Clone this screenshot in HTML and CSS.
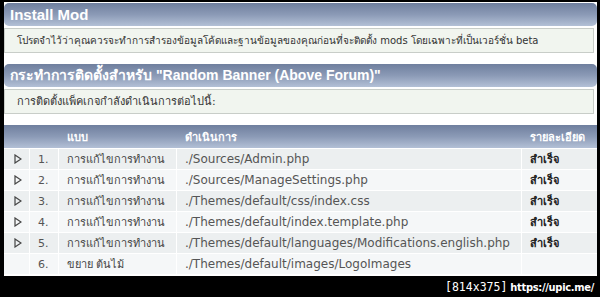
FILE: index.html
```html
<!DOCTYPE html>
<html lang="th">

<head>
    <meta charset="UTF-8">
    <title>Install Mod</title>
    <link rel="stylesheet" href="styles.css">
</head>

<body>

    <div class="frame">
        <h3 class="catbg first">Install Mod</h3>
        <div class="infobox small">โปรดจำไว้ว่าคุณควรจะทำการสำรองข้อมูลโค้ดและฐานข้อมูลของคุณก่อนที่จะติดตั้ง mods โดยเฉพาะที่เป็นเวอร์ชั่น beta</div>

        <h3 class="catbg">กระทำการติดตั้งสำหรับ "Random Banner (Above Forum)"</h3>
        <div class="infobox">การติดตั้งแพ็คเกจกำลังดำเนินการต่อไปนี้:</div>

        <table class="actions">
            <thead>
                <tr>
                    <th class="col-icon"></th>
                    <th class="col-num"></th>
                    <th class="col-type">แบบ</th>
                    <th class="col-path">ดำเนินการ</th>
                    <th class="col-state">รายละเอียด</th>
                </tr>
            </thead>
            <tbody>
                <tr class="odd">
                    <td><svg class="arrow" width="8" height="10" viewBox="0 0 8 10"><path d="M1 1 L7 5 L1 9 Z" fill="none" stroke="#444" stroke-width="1.2"/></svg></td>
                    <td>1.</td>
                    <td>การแก้ไขการทำงาน</td>
                    <td class="path">./Sources/Admin.php</td>
                    <td>สำเร็จ</td>
                </tr>
                <tr class="even">
                    <td><svg class="arrow" width="8" height="10" viewBox="0 0 8 10"><path d="M1 1 L7 5 L1 9 Z" fill="none" stroke="#444" stroke-width="1.2"/></svg></td>
                    <td>2.</td>
                    <td>การแก้ไขการทำงาน</td>
                    <td class="path">./Sources/ManageSettings.php</td>
                    <td>สำเร็จ</td>
                </tr>
                <tr class="odd">
                    <td><svg class="arrow" width="8" height="10" viewBox="0 0 8 10"><path d="M1 1 L7 5 L1 9 Z" fill="none" stroke="#444" stroke-width="1.2"/></svg></td>
                    <td>3.</td>
                    <td>การแก้ไขการทำงาน</td>
                    <td class="path">./Themes/default/css/index.css</td>
                    <td>สำเร็จ</td>
                </tr>
                <tr class="even">
                    <td><svg class="arrow" width="8" height="10" viewBox="0 0 8 10"><path d="M1 1 L7 5 L1 9 Z" fill="none" stroke="#444" stroke-width="1.2"/></svg></td>
                    <td>4.</td>
                    <td>การแก้ไขการทำงาน</td>
                    <td class="path">./Themes/default/index.template.php</td>
                    <td>สำเร็จ</td>
                </tr>
                <tr class="odd">
                    <td><svg class="arrow" width="8" height="10" viewBox="0 0 8 10"><path d="M1 1 L7 5 L1 9 Z" fill="none" stroke="#444" stroke-width="1.2"/></svg></td>
                    <td>5.</td>
                    <td>การแก้ไขการทำงาน</td>
                    <td class="path">./Themes/default/languages/Modifications.english.php</td>
                    <td>สำเร็จ</td>
                </tr>
                <tr class="even">
                    <td></td>
                    <td>6.</td>
                    <td>ขยาย ต้นไม้</td>
                    <td class="path">./Themes/default/images/LogoImages</td>
                    <td></td>
                </tr>
            </tbody>
        </table>
    </div>

    <div class="watermark"><span class="size">[814x375]</span><b>https://upic.me/</b></div>

</body>

</html>
```

FILE: styles.css
```css
body {
    margin: 0;
    padding: 0;
    width: 600px;
    height: 297px;
    overflow: hidden;
    background-color: #000;
    font-family: Tahoma, "DejaVu Sans", sans-serif;
}

.frame {
    margin: 2px 3px 0 4px;
    padding-top: 1px;
    height: 273px;
    background-color: #fff;
    overflow: hidden;
}

.catbg {
    margin: 0;
    height: 23px;
    line-height: 23px;
    padding: 0 6px;
    border-radius: 5px;
    background: linear-gradient(to bottom, #6f7f9e 0%, #8b9ab6 50%, #b3c0d6 100%);
    color: #fff;
    font-family: "Liberation Sans", Arial, sans-serif;
    font-size: 14px;
    font-weight: bold;
}

.catbg.first {
    font-size: 15px;
}

.infobox {
    margin: 2px 3px 11px 0;
    height: 23px;
    line-height: 23px;
    padding: 0 12px;
    border: 1px solid #c8cdc8;
    background-color: #f1f5ef;
    color: #333;
    font-size: 11px;
    white-space: nowrap;
}

.infobox.small {
    font-size: 10px;
}

.actions {
    width: 100%;
    border-collapse: separate;
    border-spacing: 0;
    table-layout: fixed;
    font-size: 11px;
    color: #444;
}

.actions th,
.actions td {
    box-sizing: border-box;
    padding: 0 0 0 8px;
    white-space: nowrap;
    overflow: hidden;
}

.actions th {
    height: 23px;
    text-align: left;
    background: linear-gradient(to bottom, #6f7f9e 0%, #8b9ab6 50%, #b3c0d6 100%);
    color: #fff;
    font-weight: bold;
    font-size: 11px;
}

.actions td {
    height: 21px;
    border-right: 1px solid #fff;
    border-top: 1px solid #fff;
}

.actions td:last-child {
    border-right: none;
    color: #222;
    font-weight: bold;
}

.col-icon { width: 26px; }
.col-num { width: 29px; }
.col-type { width: 118px; }
.col-path { width: 345px; }

.actions tr.odd td { background-color: #eceff0; }
.actions tr.even td { background-color: #f5f7f8; }

.actions td:first-child {
    padding-left: 10px;
}

.actions td:nth-child(2) {
    font-family: "DejaVu Sans", Verdana, sans-serif;
    color: #555;
}

.path {
    font-family: "DejaVu Sans", Verdana, sans-serif;
    font-size: 12px;
    color: #555;
}

.arrow {
    display: block;
}

.watermark {
    text-align: right;
    padding: 3px 6px 0 0;
    color: #fff;
    font-size: 13px;
    line-height: 15px;
}

.watermark .size {
    font-family: "DejaVu Sans Mono", monospace;
    font-size: 11.5px;
    margin-right: 3px;
}

.watermark b {
    font-family: "DejaVu Sans Condensed", "DejaVu Sans", sans-serif;
    font-size: 11px;
    letter-spacing: -0.3px;
}
```
